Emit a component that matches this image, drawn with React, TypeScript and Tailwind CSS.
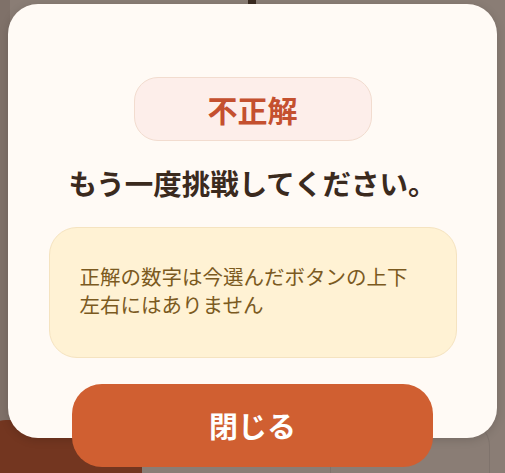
import React from 'react';

const font = { fontFamily: '"Noto Sans CJK JP", "Noto Sans", sans-serif' };

const ResultModal: React.FC = () => {
    return (
        <div className="absolute left-[8px] top-[4px] h-[434px] w-[489px] rounded-[30px] bg-[#fffaf5] shadow-[0_2px_10px_rgba(0,0,0,0.15)]">
            <div className="flex flex-col items-center pt-[73px]">
                {/* result badge */}
                <div className="flex h-[64px] w-[238px] items-center justify-center rounded-[24px] border-[1.5px] border-[#f2dccf] bg-[#fdeeea]">
                    <span className="text-[30px] font-bold leading-none text-[#c4502f]">不正解</span>
                </div>

                <h2 className="mt-[22px] text-[28.5px] font-bold leading-[40px] text-[#3b2a1e]">
                    もう一度挑戦してください。
                </h2>

                {/* hint */}
                <div className="mt-[24px] flex h-[131px] w-[408px] items-center rounded-[28px] border-[1.5px] border-[#f5e3c0] bg-[#fff2d4] px-[30px] pb-[6px]">
                    <p className="text-[20.5px] font-normal leading-[28px] text-[#7b5a1f]">
                        正解の数字は今選んだボタンの上下左右にはありません
                    </p>
                </div>

                <button className="mt-[26px] flex h-[83px] w-[361px] items-center justify-center rounded-[30px] bg-[#d05f31] text-[29px] font-bold text-white">
                    閉じる
                </button>
            </div>
        </div>
    );
};

export default function App() {
    return (
        <div className="relative h-[473px] w-[505px] overflow-hidden bg-[#8a7d75]" style={font}>
            {/* dimmed board behind the overlay */}
            <div className="absolute left-0 top-0 h-full w-[10px] bg-[#7f7169]" />
            <div className="absolute left-[248px] top-0 h-[6px] w-[8px] bg-[#3a2a20]" />
            <div className="absolute left-[-20px] top-[420px] h-[80px] w-[162px] rounded-[26px] bg-[#733620]" />
            <div className="absolute left-[330px] top-[420px] h-[80px] w-[160px] rounded-[26px] border border-[#7f736c]" />
            <ResultModal />
        </div>
    );
}
